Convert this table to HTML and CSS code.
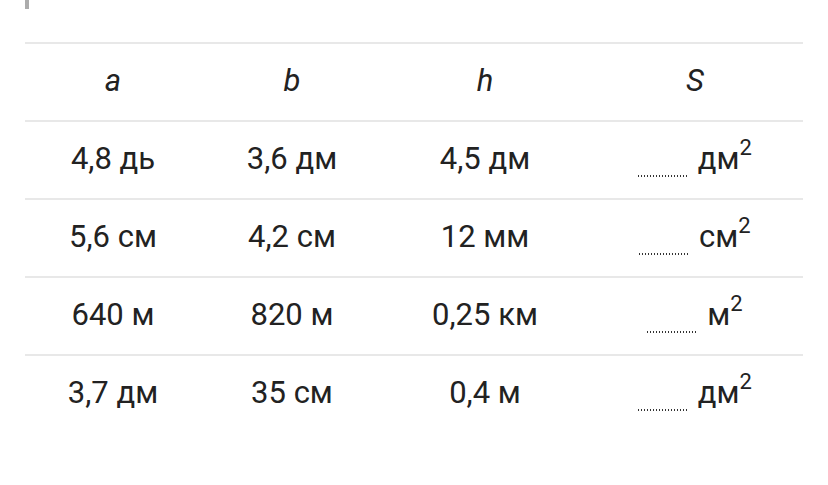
FILE: index.html
```html
<!DOCTYPE html>
<html lang="ru">
<head>
<meta charset="utf-8">
<link rel="stylesheet" href="styles.css">
</head>
<body>
<div class="page">
  <div class="quote-edge"></div>
  <table class="grid">
    <colgroup>
      <col class="c1"><col class="c2"><col class="c3"><col class="c4">
    </colgroup>
    <thead>
      <tr><th>a</th><th>b</th><th>h</th><th>S</th></tr>
    </thead>
    <tbody>
      <tr><td>4,8 дь</td><td>3,6 дм</td><td>4,5 дм</td><td><span class="blank"></span> дм<sup>2</sup></td></tr>
      <tr><td>5,6 см</td><td>4,2 см</td><td>12 мм</td><td><span class="blank"></span> см<sup>2</sup></td></tr>
      <tr><td>640 м</td><td>820 м</td><td>0,25 км</td><td><span class="blank"></span> м<sup>2</sup></td></tr>
      <tr><td>3,7 дм</td><td>35 см</td><td>0,4 м</td><td><span class="blank"></span> дм<sup>2</sup></td></tr>
    </tbody>
  </table>
</div>
</body>
</html>
```

FILE: styles.css
```css
html, body {
  margin: 0;
  padding: 0;
  background: #ffffff;
}
body {
  font-family: Roboto, "Noto Sans", Arial, sans-serif;
  color: #222222;
}
.page {
  padding: 0 25px;
}
.quote-edge {
  width: 4px;
  height: 9px;
  background: #acacac;
  margin-bottom: 33px;
}
.grid {
  width: 778px;
  border-collapse: collapse;
  table-layout: fixed;
  font-size: 31px;
}
.c1 { width: 176px; }
.c2 { width: 182px; }
.c3 { width: 204px; }
.c4 { width: 216px; }
.grid th,
.grid td {
  height: 72px;
  padding: 0 0 4px;
  text-align: center;
  vertical-align: middle;
  font-weight: 400;
  white-space: nowrap;
}
.grid thead tr {
  border-top: 2px solid #e8e8e8;
  border-bottom: 2px solid #e8e8e8;
}
.grid tbody tr {
  border-bottom: 2px solid #e8e8e8;
}
.grid tbody tr:last-child {
  border-bottom: none;
}
.grid th {
  font-style: italic;
}
.blank {
  display: inline-block;
  width: 50px;
  height: 2px;
  vertical-align: -8px;
  background-image: linear-gradient(to right, #333333 50%, transparent 50%);
  background-size: 3px 2px;
  margin-right: 2px;
}
.grid sup {
  font-size: 22px;
  line-height: 0;
  vertical-align: 14px;
}
```
